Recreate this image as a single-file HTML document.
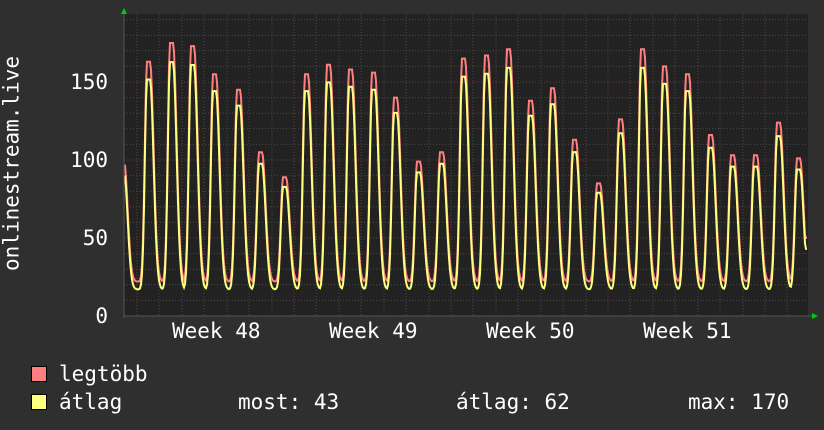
<!DOCTYPE html>
<html><head><meta charset="utf-8"><style>
body{margin:0;width:824px;height:430px;background:#2f2f2f;overflow:hidden;font-family:"DejaVu Sans Mono","Liberation Mono",monospace;color:#fff}
.t{position:absolute;font-size:21px;line-height:21px;white-space:pre}
.sq{position:absolute;width:14px;height:14px;border:1px solid #000}
</style></head><body>
<svg id="g" width="824" height="430" style="position:absolute;left:0;top:0"></svg>
<div class="t" style="left:-98px;top:153px;transform:rotate(-90deg);transform-origin:center;width:220px;text-align:center">onlinestream.live</div>
<div class="t" style="right:716px;top:72px">150</div>
<div class="t" style="right:716px;top:150px">100</div>
<div class="t" style="right:716px;top:228px">50</div>
<div class="t" style="right:716px;top:306px">0</div>
<div class="t" style="left:172px;top:321px">Week 48</div>
<div class="t" style="left:329px;top:321px">Week 49</div>
<div class="t" style="left:486px;top:321px">Week 50</div>
<div class="t" style="left:643px;top:321px">Week 51</div>
<div class="sq" style="left:31px;top:366px;background:#ff7f7f"></div>
<div class="t" style="left:59px;top:364px">legtöbb</div>
<div class="sq" style="left:31px;top:394px;background:#ffff7f"></div>
<div class="t" style="left:59px;top:392px">átlag</div>
<div class="t" style="left:238px;top:392px">most: 43</div>
<div class="t" style="left:456px;top:392px">átlag: 62</div>
<div class="t" style="left:688px;top:392px">max: 170</div>
<script>
var s='';
var L=124,R=808,T=14,B=316;
function Y(v){return 316-v*1.56;}
s+='<rect x="'+L+'" y="'+T+'" width="'+(R-L)+'" height="'+(B-T)+'" fill="#222"/>';
for(var v=10;v<=190;v+=10){var y=Y(v);var maj=v%50==0;s+='<line x1="'+L+'" x2="'+R+'" y1="'+y+'" y2="'+y+'" stroke="'+(maj?'#6a3a3a':'#4a4a4a')+'" stroke-dasharray="1,2"/>';}
for(var x=137;x<R;x+=22.43){var xi=Math.round(x);var m=((xi-137)%157+157)%157;var wk=m<3||m>154;s+='<line x1="'+xi+'" x2="'+xi+'" y1="'+T+'" y2="'+B+'" stroke="'+(wk?'#6a3a3a':'#4a4a4a')+'" stroke-dasharray="1,2"/>';}
var pk=[[121,100],[147,163],[170,175],[191,173],[213,155],[237,145],[259,105],[283,89],[305,155],[327,161],[349,158],[372,156],[394,140],[417,99],[440,105],[462,165],[485,167],[507,171],[529,138],[551,146],[573,113],[597,85],[619,126],[641,171],[663,160],[686,155],[709,116],[731,103],[754,103],[777,124],[797,101]];
function val(x,k,base){var v=0;for(var i=0;i<pk.length;i++){var d=x-pk[i][0];var f;
if(d<0)f=Math.exp(-d*d/(2*2.2*2.2));else if(d<3)f=1;else f=Math.exp(-(d-3)*(d-3)/(2*3.6*3.6));
v=Math.max(v,(pk[i][1]*k-base)*f);}
var r=base+v; if(x>800) r=Math.max(r,k>0.95?50:43); return r;}
var pr='',py='';
for(var x=125;x<=807;x+=1){var a=val(x,1,22),b=val(x,0.93,17);pr+=(x==125?'M':'L')+x+','+Y(a).toFixed(1)+' ';py+=(x==125?'M':'L')+x+','+Y(b).toFixed(1)+' ';}
s+='<path d="'+pr+'" fill="none" stroke="#ff7f7f" stroke-width="2"/>';
s+='<path d="'+py+'" fill="none" stroke="#ffff7f" stroke-width="2"/>';
s+='<line x1="'+L+'" x2="'+(R+4)+'" y1="316" y2="316" stroke="#555"/><line x1="124" x2="124" y1="12" y2="318" stroke="#555"/>';
s+='<polygon points="121,14 127,14 124,8" fill="#0c0"/><polygon points="812,313 812,319 818,316" fill="#0c0"/>';
document.getElementById('g').innerHTML=s;
</script>
</body></html>
